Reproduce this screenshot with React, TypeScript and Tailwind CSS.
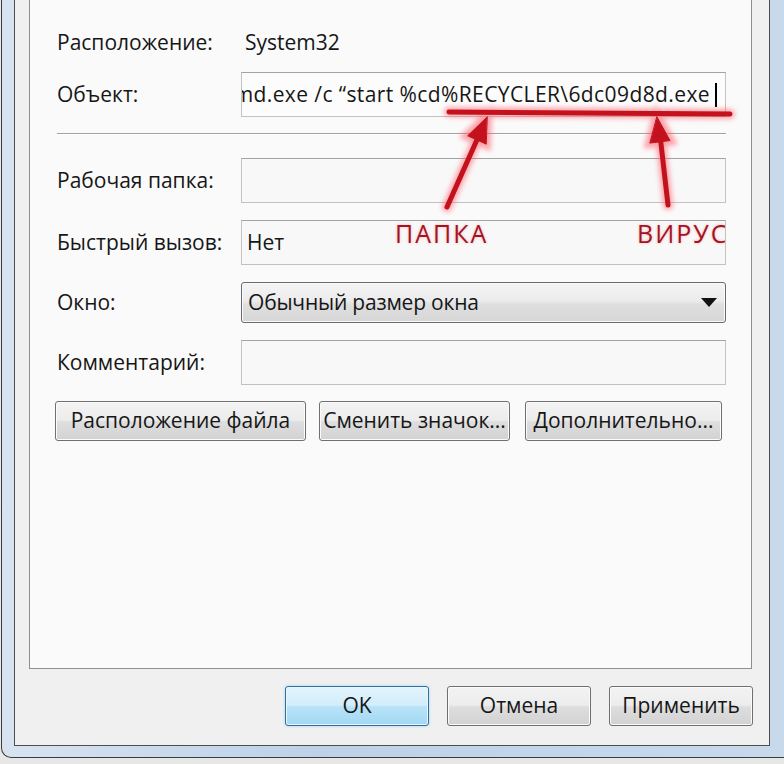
import type { ReactNode } from "react";

const btn =
  "h-[40px] rounded-[3px] border border-[#707070] bg-[linear-gradient(#f3f3f3,#ececec_48%,#dedede_52%,#d2d2d2)] shadow-[inset_0_0_0_1px_#fbfbfb] flex items-center justify-center overflow-hidden whitespace-nowrap";

const box = "h-[45px] border border-[#c2c2c2] border-t-[#a3a3a3] bg-[#f8f8f8] flex items-center";

function Row({ label, children, className = "" }: { label: string; children?: ReactNode; className?: string }) {
  return (
    <div className={`grid grid-cols-[184px_1fr] items-center ${className}`}>
      <span className="leading-none">{label}</span>
      {children}
    </div>
  );
}

function Annotations() {
  return (
    <div className="absolute inset-0 pointer-events-none">
      <svg width="784" height="764" className="absolute left-0 top-0">
        <defs>
          <filter id="glow" x="-20%" y="-20%" width="140%" height="140%">
            <feGaussianBlur stdDeviation="2.5" />
          </filter>
        </defs>
        <g filter="url(#glow)" opacity="0.55" stroke="#ff5a68" fill="#ff5a68" strokeLinecap="round" strokeWidth="10">
          <path d="M449 112 L730 114" />
          <path d="M447 207 L480 133" />
          <path d="M668 205 L660 135" />
          <polygon points="487,117 467.7,135.8 485.9,144" />
          <polygon points="657,117 670,140.6 650.2,143" />
        </g>
        <g stroke="#c3111d" fill="#c3111d" strokeLinecap="round" strokeWidth="5">
          <path d="M449 112 L730 114" />
          <path d="M447 207 L480 133" />
          <path d="M668 205 L660 135" />
          <polygon points="487,117 467.7,135.8 485.9,144" strokeWidth="1" />
          <polygon points="657,117 670,140.6 650.2,143" strokeWidth="1" />
        </g>
      </svg>
      <span className="absolute left-[395px] top-[221px] text-[25px] leading-none tracking-[2px] text-[#a3141f] [text-shadow:0_0_3px_#ffb0b6]">
        ПАПКА
      </span>
      <div className="absolute left-[637px] top-[216px] w-[88px] h-[34px] overflow-hidden">
        <span className="absolute left-0 top-[5px] text-[25px] leading-none tracking-[2px] text-[#a3141f] whitespace-nowrap [text-shadow:0_0_3px_#ffb0b6]">
          ВИРУС
        </span>
      </div>
    </div>
  );
}

export default function App() {
  return (
    <div className="relative w-[784px] h-[764px] overflow-hidden bg-[#e7e7e7] font-['Open_Sans','Noto_Sans',sans-serif] text-[21px] text-[#161616]">
      {/* Blue window frame */}
      <div className="ml-[1px] h-[758px] w-[783px] border-l border-b border-[#3b3b3b] rounded-bl-[10px] bg-[linear-gradient(90deg,#d7e3f1,#bdd1e8_40%,#c8d9ec)] pl-[12px] pr-[14px] pb-[11px]">
        {/* Dialog body */}
        <div className="h-full border-x border-b border-[#4e4e4e] bg-[#f0f0f0] pl-[14px] pr-[16px] flex flex-col">
          {/* Tab panel */}
          <div className="h-[669px] w-[723px] border-x border-b border-[#8d8e90] bg-[#fafafa] pl-[27px] pr-[25px] pt-[20px] flex flex-col">
            <Row label="Расположение:" className="h-[45px]">
              <span className="pl-[4px] leading-none">System32</span>
            </Row>
            <Row label="Объект:" className="mt-[7px]">
              <div className={`${box} relative border-[#a8a8a8] border-t-[#8c8c8c] bg-[#fcfcfc] overflow-hidden whitespace-nowrap`}>
                <div className="absolute right-[8px] top-0 bottom-0 flex items-center">
                  <span className="leading-none tracking-[0.4px]">md.exe /c “start %cd%RECYCLER\6dc09d8d.exe</span>
                  <span className="ml-[5px] w-[2px] h-[24px] bg-black shrink-0" />
                </div>
              </div>
            </Row>
            <div className="mt-[16px] h-[2px] border-t border-[#a2a2a2] border-b border-b-white" />
            <Row label="Рабочая папка:" className="mt-[23px]">
              <div className={box} />
            </Row>
            <Row label="Быстрый вызов:" className="mt-[17px]">
              <div className={`${box} pl-[5px]`}>
                <span className="leading-none">Нет</span>
              </div>
            </Row>
            <Row label="Окно:" className="mt-[17px]">
              <div className="h-[41px] rounded-[3px] border border-[#6a6a6a] bg-[linear-gradient(#f4f4f4,#ececec_45%,#dfdfdf_55%,#d6d6d6)] shadow-[inset_0_0_0_1px_#fafafa] flex items-center justify-between pl-[6px] pr-[8px]">
                <span className="leading-none tracking-[-0.2px]">Обычный размер окна</span>
                <svg width="16" height="9" viewBox="0 0 16 9">
                  <path d="M0 0 H16 L8 9 Z" fill="#111" />
                </svg>
              </div>
            </Row>
            <Row label="Комментарий:" className="mt-[17px]">
              <div className={box} />
            </Row>
            <div className="mt-[16px] -ml-[2px] flex">
              <div className={`${btn} w-[251px]`}>Расположение файла</div>
              <div className={`${btn} w-[191px] ml-[13px]`}>Сменить значок...</div>
              <div className={`${btn} w-[197px] ml-[15px]`}>Дополнительно...</div>
            </div>
          </div>
          {/* Dialog buttons */}
          <div className="flex justify-end gap-[18px] pt-[17px]">
            <div className="h-[40px] w-[144px] rounded-[3px] border border-[#2f6f9f] bg-[linear-gradient(#e3f4fc,#d2edfb_48%,#b8e3f8_52%,#a3d8f3)] shadow-[inset_0_0_0_1px_#e8f7fe,0_0_3px_#9fd3f0] flex items-center justify-center">
              OK
            </div>
            <div className={`${btn} w-[144px]`}>Отмена</div>
            <div className={`${btn} w-[144px]`}>Применить</div>
          </div>
        </div>
      </div>
      <Annotations />
    </div>
  );
}
